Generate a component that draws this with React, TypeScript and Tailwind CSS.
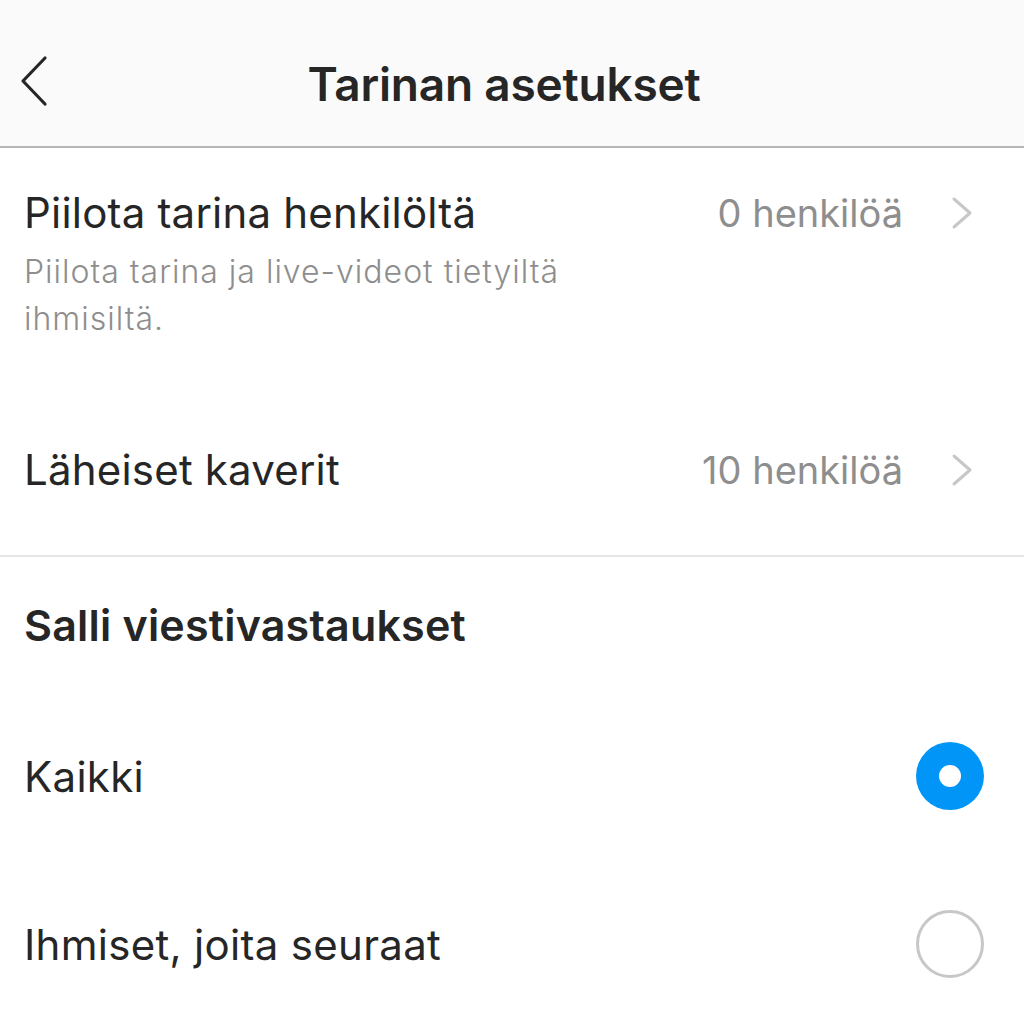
import React from "react";

function ChevronRight() {
  return (
    <svg width="24" height="34" viewBox="0 0 24 34" fill="none">
      <path d="M4 3 L20 17 L4 31" stroke="#c7c7c7" strokeWidth="3" strokeLinecap="round" strokeLinejoin="round" />
    </svg>
  );
}

export default function App() {
  return (
    <div className="w-[1024px] h-[1024px] bg-white overflow-hidden text-[#262626]" style={{ fontFamily: "Inter, 'Noto Sans', sans-serif" }}>
      <div className="h-[148px] bg-[#fafafa] border-b-2 border-[#b5b5b5] relative flex items-center justify-center">
        <div className="absolute left-[18px] top-[55px]">
          <svg width="32" height="52" viewBox="0 0 32 52" fill="none">
            <path d="M27 3 L5 26 L27 49" stroke="#262626" strokeWidth="3.2" strokeLinecap="round" strokeLinejoin="round" />
          </svg>
        </div>
        <div className="text-[46px] font-semibold tracking-[-0.2px] mt-[22px] ml-[-16px]">Tarinan asetukset</div>
      </div>

      <div className="px-[24px] pt-[40px]">
        <div className="flex items-center h-[50px]">
          <div className="flex-1 text-[42px] tracking-[0.2px] leading-[50px]">Piilota tarina henkilöltä</div>
          <div className="text-[38px] text-[#8e8e8e] mr-[47px]">0 henkilöä</div>
          <div className="mr-[26px]"><ChevronRight /></div>
        </div>
        <div className="mt-[10px] text-[32px] tracking-[1px] leading-[47px] text-[#8e8e8e] w-[620px] font-light">
          Piilota tarina ja live-videot tietyiltä ihmisiltä.
        </div>
        <div className="flex items-center h-[50px] mt-[103px]">
          <div className="flex-1 text-[42px] tracking-[0.2px] leading-[50px]">Läheiset kaverit</div>
          <div className="text-[38px] text-[#8e8e8e] mr-[47px]">10 henkilöä</div>
          <div className="mr-[26px]"><ChevronRight /></div>
        </div>
      </div>
      <div className="mt-[60px] h-[2px] bg-[#e6e6e6]" />

      <div className="px-[24px]">
        <div className="mt-[43px] h-[50px] leading-[50px] text-[43px] font-semibold tracking-[0.2px]">Salli viestivastaukset</div>
        <div className="mt-[101px] flex items-center h-[50px]">
          <div className="flex-1 text-[42px] tracking-[0.3px]">Kaikki</div>
          <div className="mr-[16px] w-[68px] h-[68px] rounded-full bg-[#0095f6] flex items-center justify-center">
            <div className="w-[22px] h-[22px] rounded-full bg-white" />
          </div>
        </div>
        <div className="mt-[118px] flex items-center h-[50px]">
          <div className="flex-1 text-[42px] tracking-[0.3px]">Ihmiset, joita seuraat</div>
          <div className="mr-[16px] w-[68px] h-[68px] rounded-full border-[3px] border-[#c7c7c7]" />
        </div>
      </div>
    </div>
  );
}
